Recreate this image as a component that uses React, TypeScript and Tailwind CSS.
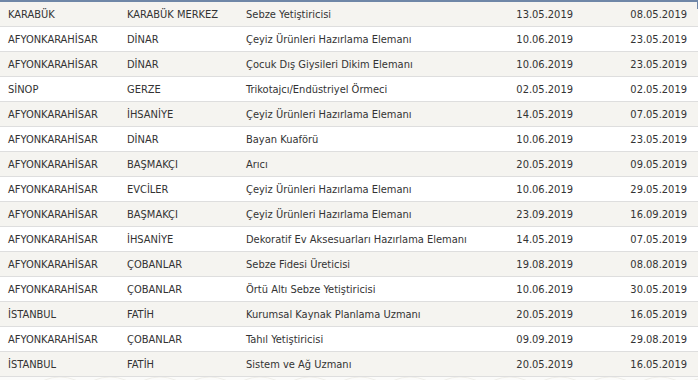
const rows = [
  ["KARABÜK", "KARABÜK MERKEZ", "Sebze Yetiştiricisi", "13.05.2019", "08.05.2019"],
  ["AFYONKARAHİSAR", "DİNAR", "Çeyiz Ürünleri Hazırlama Elemanı", "10.06.2019", "23.05.2019"],
  ["AFYONKARAHİSAR", "DİNAR", "Çocuk Dış Giysileri Dikim Elemanı", "10.06.2019", "23.05.2019"],
  ["SİNOP", "GERZE", "Trikotajcı/Endüstriyel Örmeci", "02.05.2019", "02.05.2019"],
  ["AFYONKARAHİSAR", "İHSANİYE", "Çeyiz Ürünleri Hazırlama Elemanı", "14.05.2019", "07.05.2019"],
  ["AFYONKARAHİSAR", "DİNAR", "Bayan Kuaförü", "10.06.2019", "23.05.2019"],
  ["AFYONKARAHİSAR", "BAŞMAKÇI", "Arıcı", "20.05.2019", "09.05.2019"],
  ["AFYONKARAHİSAR", "EVCİLER", "Çeyiz Ürünleri Hazırlama Elemanı", "10.06.2019", "29.05.2019"],
  ["AFYONKARAHİSAR", "BAŞMAKÇI", "Çeyiz Ürünleri Hazırlama Elemanı", "23.09.2019", "16.09.2019"],
  ["AFYONKARAHİSAR", "İHSANİYE", "Dekoratif Ev Aksesuarları Hazırlama Elemanı", "14.05.2019", "07.05.2019"],
  ["AFYONKARAHİSAR", "ÇOBANLAR", "Sebze Fidesi Üreticisi", "19.08.2019", "08.08.2019"],
  ["AFYONKARAHİSAR", "ÇOBANLAR", "Örtü Altı Sebze Yetiştiricisi", "10.06.2019", "30.05.2019"],
  ["İSTANBUL", "FATİH", "Kurumsal Kaynak Planlama Uzmanı", "20.05.2019", "16.05.2019"],
  ["AFYONKARAHİSAR", "ÇOBANLAR", "Tahıl Yetiştiricisi", "09.09.2019", "29.08.2019"],
  ["İSTANBUL", "FATİH", "Sistem ve Ağ Uzmanı", "20.05.2019", "16.05.2019"],
]

export default function App() {
  return (
    <div className="relative w-[698px] h-[380px] overflow-hidden bg-[#fbfbfa] font-['DejaVu_Sans_Condensed','DejaVu_Sans',sans-serif] text-[11px] text-[#333]">
      {/* short edge of the panel frame at the top right */}
      <div className="absolute right-0 top-0 w-px h-[9px] bg-[#6f87a7]" />
      <div className="border-t-2 border-[#6f87a7]">
        {rows.map((r, i) => (
          <div
            key={i}
            className={`grid grid-cols-[119px_119px_1fr_115px_116px] h-[25px] pt-[2px] items-center border-b border-[#dedede] ${
              i % 2 === 0 ? "bg-[#f5f4f0]" : "bg-white"
            }`}
          >
            <div className="pl-2 whitespace-nowrap">{r[0]}</div>
            <div className="pl-2 whitespace-nowrap">{r[1]}</div>
            <div className="pl-2 whitespace-nowrap">{r[2]}</div>
            <div className="pr-[9px] text-right">{r[3]}</div>
            <div className="pr-[11px] text-right">{r[4]}</div>
          </div>
        ))}
      </div>
      {/* faint background ornament below the table */}
      <svg width="698" height="20" className="block">
        {[0, 1, 2, 3, 4, 5, 6].map((k) => (
          <g key={k} fill="none" stroke="#efeee9" strokeWidth="1">
            <circle cx={60 + k * 100} cy={40} r={40} />
            <circle cx={110 + k * 100} cy={40} r={40} />
          </g>
        ))}
      </svg>
    </div>
  )
}
